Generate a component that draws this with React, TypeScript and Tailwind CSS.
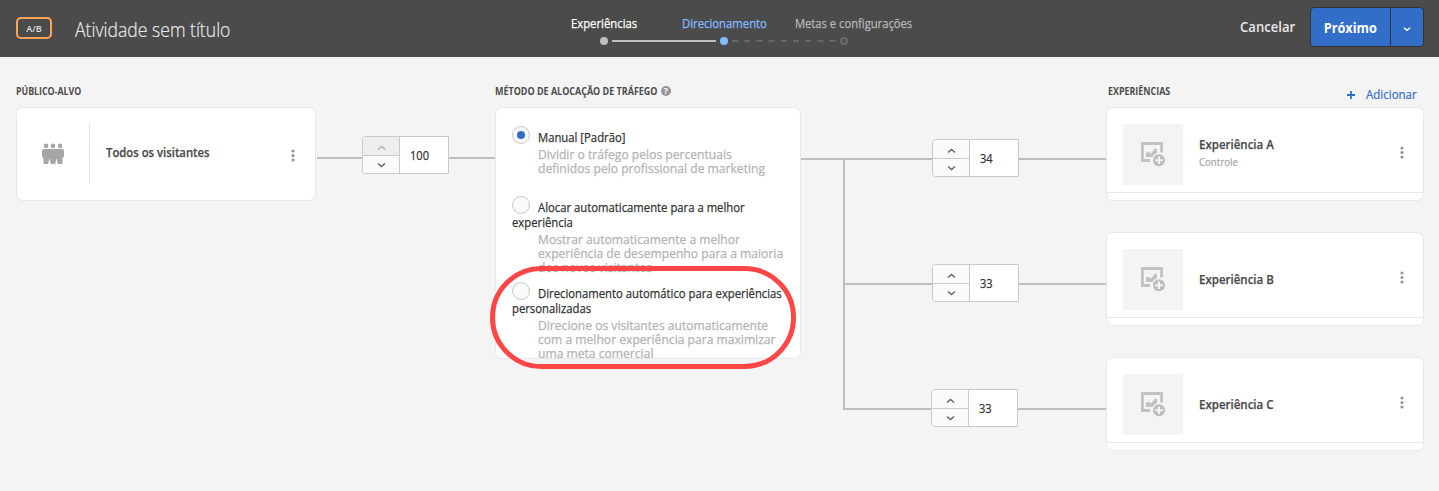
import React from "react";

function Chevron({ up = false, className = "" }: { up?: boolean; className?: string }) {
  return (
    <svg width="9" height="6" viewBox="0 0 9 6" fill="none" className={className}>
      <path d={up ? "M1 4.5 4.5 1.5 8 4.5" : "M1 1.5 4.5 4.5 8 1.5"} stroke="currentColor" strokeWidth="1.6" />
    </svg>
  );
}

function Stepper({ value, atMax = false }: { value: number; atMax?: boolean }) {
  return (
    <div className="flex h-[38px] w-[87px] shrink-0 rounded-l-[4px] border border-[#cacaca] bg-white">
      <div className="flex w-[37px] flex-col border-r border-[#cacaca]">
        <button className={`flex h-[19px] items-center justify-center rounded-tl-[3px] border-b border-[#cacaca] pt-[3px] ${atMax ? "bg-[#eeeeee] text-[#b3b3b3]" : "bg-[#fafafa] text-[#6a6a6a]"}`}>
          <Chevron up />
        </button>
        <button className="flex h-[17px] items-center justify-center rounded-bl-[3px] bg-[#fafafa] text-[#6a6a6a]">
          <Chevron />
        </button>
      </div>
      <span className="ml-[10px] origin-left scale-x-[0.85] text-[13px] leading-[37px] text-[#323232] [-webkit-text-stroke:0.25px]">{value}</span>
    </div>
  );
}

function Dots({ className = "" }: { className?: string }) {
  return (
    <svg width="4" height="13" viewBox="0 0 4 13" fill="#959595" className={`shrink-0 ${className}`}>
      <circle cx="2" cy="2" r="1.6" />
      <circle cx="2" cy="6.5" r="1.6" />
      <circle cx="2" cy="11" r="1.6" />
    </svg>
  );
}

function People() {
  return (
    <svg width="22" height="22" viewBox="0 0 22 22" fill="#a6a6a6">
      <circle cx="4" cy="2.9" r="2.3" />
      <circle cx="11" cy="2.9" r="2.3" />
      <circle cx="18" cy="2.9" r="2.3" />
      <path d="M1.8 6h18.4Q22 6.2 22 8v5.500q0 1-1.400 1.200L20.300 21H15.800L14.500 15 13.300 21H8.700L7.500 15 6.200 21H1.700l-.3-6.300Q0 14.500 0 13.500V8Q0 6.200 1.800 6z" />
    </svg>
  );
}

function AddImage() {
  return (
    <svg width="26" height="25" viewBox="0 0 26 25" fill="none">
      <path d="M10 18.500H2.400v-17h19.200V10.500" stroke="#c2c2c2" strokeWidth="2.800" />
      <path d="M6 15v-4l2-1.500 3 2L15 6.500q1.500-.5 2 1V11l-4 4z" fill="#c2c2c2" />
      <circle cx="19" cy="18.300" r="7.300" fill="#f4f4f4" />
      <circle cx="19" cy="18.300" r="6" fill="#bdbdbd" />
      <path d="M19 14.500v7.600M15.200 18.300h7.600" stroke="#f4f4f4" strokeWidth="2" />
    </svg>
  );
}

type OptionProps = { title: string; rest?: string; lines: string[]; checked?: boolean; className: string };

function Option({ title, rest, lines, checked = false, className }: OptionProps) {
  return (
    <div className={`whitespace-nowrap ${className}`}>
      <div className="flex h-[18px]">
        <span className="flex size-[18px] shrink-0 items-center justify-center rounded-full border border-[#cacaca] bg-[#fafafa]">
          {checked && <span className="size-2 rounded-full bg-[#326ec8]" />}
        </span>
        <span className="mt-1 ml-2 origin-left scale-x-[0.869] text-[13px] leading-[15px] text-[#323232] [-webkit-text-stroke:0.25px]">{title}</span>
      </div>
      {rest && <div className="mt-px w-max origin-left scale-x-[0.869] text-[13px] leading-[15px] text-[#323232] [-webkit-text-stroke:0.25px]">{rest}</div>}
      <div className={`ml-[26px] w-max origin-left scale-x-[0.932] text-[13px] leading-[14px] text-[#b3b3b3] [-webkit-text-stroke:0.25px] ${rest ? "mt-[2px]" : "mt-[3px]"}`}>
        {lines.map((line) => (
          <div key={line}>{line}</div>
        ))}
      </div>
    </div>
  );
}

function Experience({ name, note }: { name: string; note?: string }) {
  return (
    <div className="flex h-[94px] w-[318px] flex-col rounded-[7px] border border-[#e8e8e8] bg-white">
      <div className="flex h-[85px] border-b border-[#e8e8e8] pt-4 pl-4">
        <div className="flex h-[61px] w-[60px] items-center justify-center bg-[#f4f4f4]">
          <AddImage />
        </div>
        <div className={`flex h-[61px] w-[217px] flex-col items-start justify-center pl-4 whitespace-nowrap ${note ? "pb-1" : "pb-[2px]"}`}>
          <span className="origin-left scale-x-[0.885] text-[13px] leading-4 font-semibold text-[#4b4b4b] [-webkit-text-stroke:0.25px]">{name}</span>
          {note && <span className="mt-[3px] origin-left scale-x-[0.876] text-[11px] leading-[14px] text-[#a5a5a5] [-webkit-text-stroke:0.2px]">{note}</span>}
        </div>
        <Dots className="mt-[22px]" />
      </div>
    </div>
  );
}

export default function App() {
  return (
    <div className="h-[491px] w-[1439px] overflow-hidden bg-[#f4f4f4] font-['Open_Sans','Noto_Sans',sans-serif]">
      <header className="flex h-[57px] bg-[#4b4b4b] whitespace-nowrap">
        <div className="mt-[17px] ml-4 flex h-[22px] w-9 justify-center rounded-[5px] border-2 border-[#ffa55a] text-[9px] leading-[19px] font-semibold text-[#dedede]">
          <span>A/B</span>
        </div>
        <div className="mt-[17px] ml-[23px] w-[496px]">
          <h1 className="w-max origin-left scale-x-[0.88] text-[20px] leading-[26px] font-light text-[#eaeaea] [-webkit-text-stroke:0.2px]">Atividade sem título</h1>
        </div>
        <nav className="w-[669px] pt-[15px] text-[13px] leading-4 [-webkit-text-stroke:0.25px]">
          <div className="flex">
            <div className="w-[111px] text-white"><span className="inline-block origin-left scale-x-[0.87]">Experiências</span></div>
            <div className="w-[113px] text-[#85bbff]"><span className="inline-block origin-left scale-x-[0.87]">Direcionamento</span></div>
            <div className="text-[#b8b8b8]"><span className="inline-block origin-left scale-x-[0.862]">Metas e configurações</span></div>
          </div>
          <div className="flex items-center pt-[6px] pl-[29px]">
            <span className="size-2 rounded-full bg-[#bebebe]" />
            <span className="mx-1 h-[2px] w-[104px] bg-[#bebebe]" />
            <span className="size-2 rounded-full bg-[#85bbff]" />
            <svg width="104" height="2" className="mx-1"><path d="M0 1h104" stroke="#686868" strokeWidth="2" strokeDasharray="6 6.2" /></svg>
            <span className="size-2 rounded-full border-2 border-[#6a6a6a]" />
          </div>
        </nav>
        <div className="mt-[18px] w-[70px] text-[14px] leading-[18px] font-semibold text-[#e8e8e8]">
          <span className="inline-block origin-left scale-x-[0.935]">Cancelar</span>
        </div>
        <div className="mt-[7px] flex h-10 w-[114px] rounded-[4px] border border-[#323232] bg-[#326ec8] text-white">
          <button className="flex w-20 items-center justify-center border-r border-[#323232] text-[14px] font-bold"><span className="scale-x-[0.91]">Próximo</span></button>
          <button className="flex flex-1 items-center justify-center pt-[3px]"><Chevron className="w-[8px]" /></button>
        </div>
      </header>

      <main className="flex pl-4">
        <section className="w-[300px] pt-[27px]">
          <h2 className="h-[23px] w-max origin-left scale-x-[0.88] text-[10px] leading-[14px] font-bold text-[#4b4b4b]">PÚBLICO-ALVO</h2>
          <div className="flex h-[94px] rounded-[7px] border border-[#e8e8e8] bg-white pt-4">
            <div className="flex h-[60px] w-[73px] items-center justify-center border-r border-[#e1e1e1]"><People /></div>
            <div className="w-[201px] pt-5 pl-4 text-[13px] leading-4 font-semibold text-[#4b4b4b] [-webkit-text-stroke:0.25px]">
              <span className="inline-block origin-left scale-x-[0.87]">Todos os visitantes</span>
            </div>
            <Dots className="mt-[25px]" />
          </div>
        </section>

        <div className="flex w-[179px] pt-[79px]">
          <span className="mt-[21px] ml-px h-[2px] w-[45px] bg-[#bebebe]" />
          <Stepper value={100} atMax />
          <span className="mt-[21px] h-[2px] flex-1 bg-[#bebebe]" />
        </div>

        <section className="relative w-[306px] pt-[27px]">
          <div className="flex h-[23px] whitespace-nowrap text-[10px] leading-[14px] font-bold text-[#4b4b4b]">
            <h2 className="w-[166px]"><span className="inline-block origin-left scale-x-[0.897]">MÉTODO DE ALOCAÇÃO DE TRÁFEGO</span></h2>
            <span className="mt-[2px] size-[10px] rounded-full bg-[#959595] text-center text-[9px] leading-[10px] text-white">?</span>
          </div>
          <div className="h-[252px] overflow-hidden rounded-[7px] border border-[#e8e8e8] bg-white pt-[18px] pl-4">
            <Option className="h-[70px]" checked title="Manual [Padrão]" lines={["Dividir o tráfego pelos percentuais", "definidos pelo profissional de marketing"]} />
            <Option className="h-[86px]" title="Alocar automaticamente para a melhor" rest="experiência" lines={["Mostrar automaticamente a melhor", "experiência de desempenho para a maioria", "dos novos visitantes"]} />
            <Option className="h-[78px]" title="Direcionamento automático para experiências" rest="personalizadas" lines={["Direcione os visitantes automaticamente", "com a melhor experiência para maximizar", "uma meta comercial"]} />
          </div>
          <div className="absolute top-[209px] -left-[5px] h-[103px] w-[306px] rounded-[52px] border-[5px] border-[#ff4646]" />
        </section>

        <div className="flex w-[305px]">
          <span className="mt-[101px] h-[2px] w-[42px] bg-[#bebebe]" />
          <span className="mt-[101px] h-[252px] w-[2px] bg-[#bebebe]" />
          <div className="flex flex-1 flex-col gap-[87px] pt-[82px]">
            {[34, 33, 33].map((value, i) => (
              <div key={i} className="flex items-center">
                <span className={`mt-[2px] h-[2px] bg-[#bebebe] ${i === 2 ? "w-[86px]" : "w-[87px]"}`} />
                <Stepper value={value} />
                <span className="mt-[2px] h-[2px] flex-1 bg-[#bebebe]" />
              </div>
            ))}
          </div>
        </div>

        <section className="w-[318px] pt-[27px]">
          <div className="flex h-[23px] whitespace-nowrap">
            <h2 className="w-[241px] pl-[2px] text-[10px] leading-[14px] font-bold text-[#4b4b4b]"><span className="inline-block origin-left scale-x-[0.89]">EXPERIÊNCIAS</span></h2>
            <button className="flex text-[13px] leading-[21px] text-[#326ec8]">
              <svg width="8" height="8" className="mt-[7px] mr-[11px]"><path d="M4 0v8M0 4h8" stroke="currentColor" strokeWidth="1.8" /></svg>
              <span className="origin-left scale-x-[0.885] [-webkit-text-stroke:0.2px]">Adicionar</span>
            </button>
          </div>
          <div className="flex flex-col gap-[31px]">
            <Experience name="Experiência A" note="Controle" />
            <Experience name="Experiência B" />
            <Experience name="Experiência C" />
          </div>
        </section>
      </main>
    </div>
  );
}
